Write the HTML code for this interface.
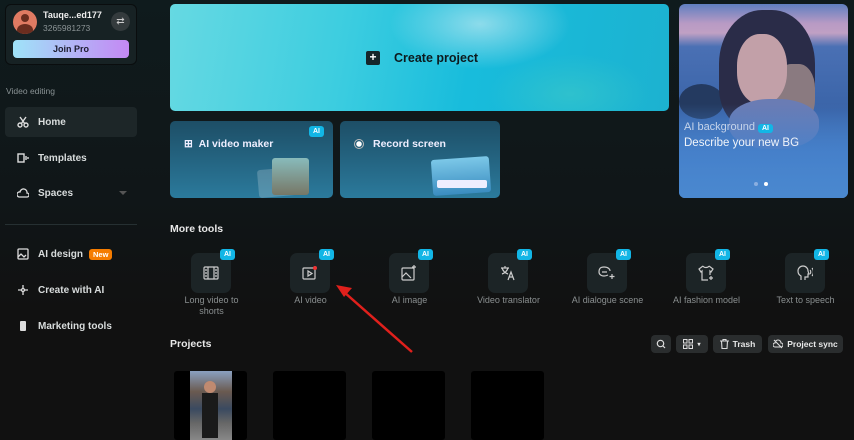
<!DOCTYPE html>
<html><head><style>
*{margin:0;padding:0;box-sizing:border-box}
body{width:854px;height:440px;overflow:hidden;background:linear-gradient(180deg,#0f1b1d 0%,#101618 45%,#111111 70%);font-family:"Liberation Sans",sans-serif;color:#e8eaea;position:relative}
.a{position:absolute}
.nav{position:absolute;left:5px;width:132px;height:30px;display:flex;align-items:center;padding-left:12px;font-size:10px;color:#d8dcdc;font-weight:bold}
.nav svg{margin-right:9px}
.ai{position:absolute;background:#12b6e6;color:#fff;font-size:7px;font-weight:bold;border-radius:3px;padding:1px 4px;line-height:9px}
.tool{position:absolute;top:253px;width:40px;height:40px;border-radius:7px;background:#1c2426;display:flex;align-items:center;justify-content:center}
.tl{position:absolute;top:295px;width:99px;text-align:center;font-size:9px;color:#8a8f90;line-height:11px}
.btn{position:absolute;top:335px;height:18px;border-radius:4px;background:#2a2d2e;font-size:8.5px;font-weight:bold;color:#e8e8e8;display:flex;align-items:center;justify-content:center;gap:4px}
.th{position:absolute;top:371px;width:73px;height:69px;background:#000;border-radius:3px}
</style></head><body>
<!-- sidebar -->
<div class="a" style="left:5px;top:4px;width:132px;height:61px;background:#172224;border-radius:6px;border:1px solid #0a0d0e"></div>
<div class="a" style="left:13px;top:10px;width:24px;height:24px;border-radius:50%;background:#e07a62;overflow:hidden"><div class="a" style="left:8px;top:4px;width:8px;height:8px;border-radius:50%;background:#6b2d1f"></div><div class="a" style="left:4px;top:14px;width:16px;height:12px;border-radius:50%;background:#6b2d1f"></div></div>
<div class="a" style="left:43px;top:10px;font-size:9px;font-weight:bold;color:#eee">Tauqe...ed177</div>
<div class="a" style="left:43px;top:23px;font-size:8.5px;color:#8c9496">3265981273</div>
<div class="a" style="left:111px;top:12px;width:19px;height:19px;border-radius:50%;background:#343b3d;color:#ccc;font-size:10px;text-align:center;line-height:19px">⇄</div>
<div class="a" style="left:13px;top:40px;width:116px;height:18px;border-radius:4px;background:linear-gradient(90deg,#9fe3f8,#c488f4);color:#1b1b2e;font-size:9px;font-weight:bold;text-align:center;line-height:18px">Join Pro</div>
<div class="a" style="left:6px;top:86px;font-size:8.5px;color:#8a9294">Video editing</div>
<div class="nav" style="top:107px;background:#1d2628;border-radius:4px"><svg width="12" height="12" viewBox="0 0 12 12" fill="none" stroke="#ddd" stroke-width="1.4"><circle cx="3" cy="9" r="2"/><circle cx="9" cy="9" r="2"/><path d="M3 1l5 7M9 1L4 8"/></svg>Home</div>
<div class="nav" style="top:143px"><svg width="12" height="12" viewBox="0 0 12 12" fill="none" stroke="#ddd" stroke-width="1.4"><rect x="1" y="2" width="6" height="8"/><path d="M9 4v4M11 5v2"/></svg>Templates</div>
<div class="nav" style="top:178px"><svg width="12" height="12" viewBox="0 0 12 12" fill="none" stroke="#ddd" stroke-width="1.3"><path d="M2 10h8a2 2 0 0 0 0-4 3.5 3.5 0 0 0-7-1 2.5 2.5 0 0 0-1 5z"/></svg>Spaces</div>
<div class="a" style="left:119px;top:191px;border:4px solid transparent;border-top:4px solid #555"></div>
<div class="a" style="left:5px;top:224px;width:132px;height:1px;background:#263032"></div>
<div class="nav" style="top:239px"><svg width="12" height="12" viewBox="0 0 12 12" fill="none" stroke="#ddd" stroke-width="1.3"><rect x="1" y="1" width="10" height="10" rx="1"/><path d="M1 9l3-3 3 3 2-2"/></svg>AI design<span style="margin-left:6px;background:#f57c00;color:#fff;font-size:7.5px;padding:1px 4px;border-radius:3px">New</span></div>
<div class="nav" style="top:275px"><svg width="12" height="12" viewBox="0 0 12 12" fill="none" stroke="#ddd" stroke-width="1.3"><path d="M6 1v3M6 8v3M1 6h3M8 6h3"/><circle cx="6" cy="6" r="1.5"/></svg>Create with AI</div>
<div class="nav" style="top:311px"><svg width="12" height="12" viewBox="0 0 12 12"><rect x="3" y="1" width="6" height="10" rx="1" fill="#ddd"/></svg>Marketing tools</div>
<!-- banner -->
<div class="a" style="left:170px;top:4px;width:499px;height:107px;border-radius:5px;background:radial-gradient(ellipse 90px 45px at 310px 20px,rgba(180,230,240,.75),transparent),radial-gradient(ellipse 80px 40px at 400px 90px,rgba(60,200,200,.6),transparent),linear-gradient(100deg,#66d9e2 0%,#3ccde0 35%,#18bcdc 60%,#1cb2d0 100%)"></div>
<div class="a" style="left:366px;top:51px;width:14px;height:14px;border-radius:2px;background:#15262a;color:#fff;font-size:12px;line-height:13px;text-align:center;font-weight:bold">+</div>
<div class="a" style="left:394px;top:51px;font-size:12.5px;font-weight:bold;color:#0c1a1e">Create project</div>
<!-- cards -->
<div class="a" style="left:170px;top:121px;width:163px;height:77px;border-radius:5px;background:linear-gradient(180deg,#1d4e66,#2b7a9c)"></div>
<div class="a" style="left:258px;top:168px;width:50px;height:28px;background:rgba(255,255,255,.2);border-radius:3px;transform:rotate(-5deg)"></div>
<div class="a" style="left:272px;top:158px;width:37px;height:37px;background:linear-gradient(#8bb,#776);border-radius:3px"></div>
<div class="ai" style="left:309px;top:126px">AI</div>
<div class="a" style="left:184px;top:138px;font-size:10.5px;font-weight:bold;color:#eef">⊞ &nbsp;AI video maker</div>
<div class="a" style="left:340px;top:121px;width:160px;height:77px;border-radius:5px;background:linear-gradient(180deg,#1d4e66,#2b7a9c)"></div>
<div class="a" style="left:432px;top:158px;width:58px;height:36px;background:linear-gradient(#7cc8e8,#3a8cc0);border-radius:3px;transform:rotate(-4deg)"></div>
<div class="a" style="left:437px;top:180px;width:50px;height:8px;background:#eef;border-radius:2px"></div>
<div class="a" style="left:354px;top:139px;width:10px;height:10px;border-radius:50%;border:1px solid #bbb;background:radial-gradient(#fff 0 2.5px,transparent 3px)"></div>
<div class="a" style="left:373px;top:138px;font-size:10.5px;font-weight:bold;color:#eef">Record screen</div>
<!-- right card -->
<div class="a" style="left:679px;top:4px;width:169px;height:194px;border-radius:6px;overflow:hidden;background:linear-gradient(180deg,#5f7fc0 0%,#b89ac4 10%,#c0a0c4 15%,#4a70b4 22%,#3a64a8 55%,#4a88cf 100%)">
<div class="a" style="left:0;top:80px;width:45px;height:35px;border-radius:50%;background:#243a60"></div>
<div class="a" style="left:40px;top:6px;width:96px;height:120px;border-radius:45% 45% 35% 35%;background:#2a2c48"></div>
<div class="a" style="left:96px;top:60px;width:40px;height:60px;border-radius:40%;background:#8a7a80"></div>
<div class="a" style="left:58px;top:30px;width:50px;height:70px;border-radius:45%;background:#c2a0a8"></div>
<div class="a" style="left:50px;top:95px;width:90px;height:50px;border-radius:45%;background:#6a7cb4"></div>
<div class="a" style="left:0;top:100px;width:169px;height:94px;background:linear-gradient(180deg,transparent,rgba(70,130,205,.8) 50%,#4a88cf)"></div>
</div>
<div class="a" style="left:684px;top:121px;font-size:11px;color:#c6d4ea">AI background <span style="background:#12b6e6;color:#fff;font-size:7px;font-weight:bold;padding:1px 4px;border-radius:3px">AI</span></div>
<div class="a" style="left:684px;top:137px;font-size:11.5px;color:#f0f4fa">Describe your new BG</div>
<div class="a" style="left:754px;top:182px;width:4px;height:4px;border-radius:50%;background:#8aaee0"></div>
<div class="a" style="left:764px;top:182px;width:4px;height:4px;border-radius:50%;background:#fff"></div>
<!-- more tools -->
<div class="a" style="left:170px;top:223px;font-size:10.5px;font-weight:bold;color:#e8e8e8">More tools</div>
<div class="tool" style="left:191px"><svg width="16" height="14" viewBox="0 0 16 14" fill="none" stroke="#ccc" stroke-width="1.2"><rect x="1" y="1" width="14" height="12" rx="1"/><path d="M5 1v12M11 1v12M2 4h2M2 7h2M2 10h2M12 4h2M12 7h2M12 10h2"/></svg></div>
<div class="tool" style="left:290px"><svg width="16" height="16" viewBox="0 0 16 16" fill="none" stroke="#ccc" stroke-width="1.2"><rect x="1" y="3" width="12" height="11" rx="1"/><path d="M6 6v5l4-2.5z"/><circle cx="13" cy="3" r="2" fill="#e33" stroke="none"/></svg></div>
<div class="tool" style="left:389px"><svg width="16" height="16" viewBox="0 0 16 16" fill="none" stroke="#ccc" stroke-width="1.2"><rect x="1" y="3" width="12" height="12" rx="1"/><path d="M1 12l4-4 5 5"/><path d="M13 0v4M11 2h4"/></svg></div>
<div class="tool" style="left:488px"><svg width="16" height="16" viewBox="0 0 16 16" fill="none" stroke="#ccc" stroke-width="1.2"><path d="M1 3h8M5 1v2M2 3c1 3 3 5 6 6M8 3c-1 3-3 5-6 6M8 15l3-8 3 8M9 12h4"/></svg></div>
<div class="tool" style="left:587px"><svg width="18" height="14" viewBox="0 0 18 14" fill="none" stroke="#ccc" stroke-width="1.2"><path d="M12 5c0-2-2-4-6-4S1 3 1 6s3 4 5 4 4-1 4-1M4 6h5"/><path d="M14 8v5M11.5 10.5h5"/></svg></div>
<div class="tool" style="left:686px"><svg width="16" height="16" viewBox="0 0 16 16" fill="none" stroke="#ccc" stroke-width="1.2"><path d="M5 1L1 4l2 3 1-1v9h6M11 1l4 3-2 3-1-1v4M5 1c1 2 5 2 6 0"/><path d="M13 11v4M11 13h4"/></svg></div>
<div class="tool" style="left:785px"><svg width="16" height="16" viewBox="0 0 16 16" fill="none" stroke="#ccc" stroke-width="1.2"><path d="M4 15v-4C2 10 1 8 1 6a5 5 0 0 1 10 0l1 3h-1v3H8v3"/><path d="M13 5c1 1 1 3 0 4M15 3c2 2 2 6 0 8"/></svg></div>
<div class="ai" style="left:220px;top:249px">AI</div><div class="ai" style="left:319px;top:249px">AI</div><div class="ai" style="left:418px;top:249px">AI</div><div class="ai" style="left:517px;top:249px">AI</div><div class="ai" style="left:616px;top:249px">AI</div><div class="ai" style="left:715px;top:249px">AI</div><div class="ai" style="left:814px;top:249px">AI</div>
<div class="tl" style="left:162px">Long video to<br>shorts</div>
<div class="tl" style="left:261px">AI video</div>
<div class="tl" style="left:360px">AI image</div>
<div class="tl" style="left:459px">Video translator</div>
<div class="tl" style="left:558px">AI dialogue scene</div>
<div class="tl" style="left:657px">AI fashion model</div>
<div class="tl" style="left:756px">Text to speech</div>
<!-- arrow -->
<svg class="a" style="left:330px;top:280px" width="90" height="80" viewBox="0 0 90 80"><path d="M82 72L14 12" stroke="#e0201c" stroke-width="2.5"/><path d="M6 5l16 3-8 9z" fill="#e0201c"/></svg>
<!-- projects -->
<div class="a" style="left:170px;top:338px;font-size:10.5px;font-weight:bold;color:#e8e8e8">Projects</div>
<div class="btn" style="left:651px;width:20px"><svg width="10" height="10" viewBox="0 0 10 10" fill="none" stroke="#ddd" stroke-width="1.2"><circle cx="4.5" cy="4.5" r="3.2"/><path d="M7 7l2 2"/></svg></div>
<div class="btn" style="left:676px;width:32px"><svg width="10" height="10" viewBox="0 0 10 10" fill="none" stroke="#ddd" stroke-width="1"><rect x="0.5" y="0.5" width="3.5" height="3.5"/><rect x="6" y="0.5" width="3.5" height="3.5"/><rect x="0.5" y="6" width="3.5" height="3.5"/><rect x="6" y="6" width="3.5" height="3.5"/></svg><span style="font-size:6px">▾</span></div>
<div class="btn" style="left:713px;width:49px"><svg width="9" height="10" viewBox="0 0 9 10" fill="none" stroke="#ddd" stroke-width="1.1"><path d="M0 2h9M3 2V0.5h3V2M1.5 2l.5 7.5h5L7.5 2"/></svg>Trash</div>
<div class="btn" style="left:768px;width:75px"><svg width="10" height="10" viewBox="0 0 10 10" fill="none" stroke="#ddd" stroke-width="1.1"><path d="M2 8h6a2 2 0 0 0 0-4 3 3 0 0 0-6 0 2 2 0 0 0 0 4zM1 1l8 8"/></svg>Project sync</div>
<div class="th" style="left:174px"><div class="a" style="left:16px;top:0;width:42px;height:69px;background:linear-gradient(180deg,#8aa0c0 0%,#6a5a50 30%,#3a4a60 55%,#666 75%,#888 100%)"></div><div class="a" style="left:30px;top:10px;width:12px;height:12px;border-radius:50%;background:#c08a70"></div><div class="a" style="left:28px;top:22px;width:16px;height:45px;background:#1a1a1a"></div></div>
<div class="th" style="left:273px"></div>
<div class="th" style="left:372px"></div>
<div class="th" style="left:471px"></div>
</body></html>
